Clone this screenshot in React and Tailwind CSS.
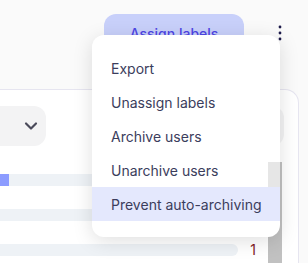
import React from "react";

function Chevron() {
  return (
    <svg width="20" height="20" viewBox="0 0 24 24" fill="none" stroke="#4a4a5a" strokeWidth="2.6" strokeLinecap="round" strokeLinejoin="round">
      <path d="m6 9 6 6 6-6" />
    </svg>
  );
}

const items = ["Export", "Unassign labels", "Archive users", "Unarchive users", "Prevent auto-archiving"];

export default function App() {
  const rows = [
    { fill: 33, value: "" },
    { fill: 0, value: "" },
    { fill: 0, value: "1" },
  ];
  return (
    <div className="relative w-[308px] h-[263px] overflow-hidden bg-[#fafafa]" style={{ fontFamily: "Inter, 'Noto Sans', sans-serif" }}>
      {/* top bar */}
      <div className="h-[89px] flex justify-end items-start pt-[14px] pr-[16px] gap-[24px]">
        <button className="w-[140px] h-[40px] rounded-[12px] bg-[#c8d0fa] text-[#4f46e5] text-[14px] font-medium leading-[20px]">
          Assign labels
        </button>
        <div className="w-[24px] pt-[11px] flex justify-center">
          <svg width="4" height="16" viewBox="0 0 4 16">
            <circle cx="2" cy="2" r="1.4" fill="#1e1b4b" />
            <circle cx="2" cy="8" r="1.4" fill="#1e1b4b" />
            <circle cx="2" cy="14" r="1.4" fill="#1e1b4b" />
          </svg>
        </div>
      </div>

      {/* card */}
      <div className="ml-[-40px] mr-[9px] h-[200px] bg-white border-t border-r border-[#e6e5f0] rounded-tr-[14px] pt-[16px] pl-[16px] pr-[14px]">
        <div className="flex gap-[64px]">
          <div className="w-[70px] h-[40px] rounded-[12px] bg-[#f3f3f4] flex items-center justify-end pr-[5px]">
            <Chevron />
          </div>
          <div className="flex-1 h-[40px] rounded-[12px] bg-[#f3f3f4]" />
        </div>
        <div className="mt-[16px] mr-[2px] flex">
          <div className="flex-1 flex flex-col">
            {rows.map((r, i) => (
              <div key={i} className="h-[35px] flex items-center">
                <div className="flex-1 h-[12px] rounded-full bg-[#eef2f6] overflow-hidden flex">
                  <div className="h-full bg-[#8c9cff]" style={{ width: r.fill }} />
                </div>
                <div className="w-[30px] text-center text-[14px] leading-[20px] text-[#7f1d1d]">{r.value}</div>
              </div>
            ))}
          </div>
          <div className="w-[14px] h-[110px] bg-[#c1c1c1]" />
        </div>
      </div>

      {/* dropdown menu */}
      <div className="absolute left-[92px] top-[35px] w-[188px] py-[16px] bg-white rounded-[12px] shadow-[0_4px_20px_rgba(0,0,0,0.13)] overflow-hidden">
        {items.map((t, i) => (
          <div
            key={t}
            className={
              "h-[34px] flex items-center pl-[19px] text-[14px] text-[#3b3d5c] " +
              (i === items.length - 1 ? "bg-[#e4e8fd]" : "")
            }
          >
            {t}
          </div>
        ))}
      </div>
      <div className="absolute left-[268px] top-[162px] w-[12px] h-[25px] bg-[#dcdcdc] opacity-70" />
    </div>
  );
}
